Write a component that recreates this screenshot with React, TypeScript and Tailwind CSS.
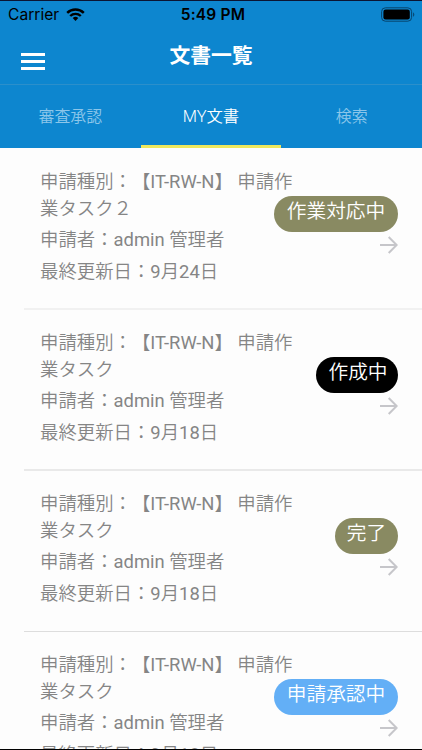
import { clsx } from 'clsx';

interface DocumentItem {
  title: string;
  applicant: string;
  updatedAt: string;
  status: string;
  badgeClass: string;
  dividerClass: string;
}

const documents: DocumentItem[] = [
  {
    title: '【IT-RW-N】 申請作業タスク２',
    applicant: 'admin 管理者',
    updatedAt: '9月24日',
    status: '作業対応中',
    badgeClass: 'w-[124px] bg-[#898a62]',
    dividerClass: 'border-b-2 border-[#f1f1f1]',
  },
  {
    title: '【IT-RW-N】 申請作業タスク',
    applicant: 'admin 管理者',
    updatedAt: '9月18日',
    status: '作成中',
    badgeClass: 'w-[82px] pl-[2px] bg-black',
    dividerClass: 'border-b-2 border-[#e9e9e9]',
  },
  {
    title: '【IT-RW-N】 申請作業タスク',
    applicant: 'admin 管理者',
    updatedAt: '9月18日',
    status: '完了',
    badgeClass: 'w-[63px] bg-[#898a62]',
    dividerClass: 'border-b border-[#dddddd]',
  },
  {
    title: '【IT-RW-N】 申請作業タスク',
    applicant: 'admin 管理者',
    updatedAt: '9月18日',
    status: '申請承認中',
    badgeClass: 'w-[124px] bg-[#63aff6]',
    dividerClass: 'border-b border-[#dddddd]',
  },
];

const tabs = [
  { label: '審査承認', active: false },
  { label: 'MY文書', active: true },
  { label: '検索', active: false },
];

function StatusBar() {
  return (
    <div className="grid h-[27px] grid-cols-3 items-center pl-2 pr-[7px] pt-px font-['Inter','Liberation_Sans',sans-serif] text-black">
      <div className="flex items-center gap-2">
        <span className="text-[15.6px] font-normal leading-none">Carrier</span>
        <svg className="-ml-px -mt-px h-[13px] w-[19px]" viewBox="0 0 19 13">
          <path d="M1.2 4.8a12 12 0 0 1 16.6 0" fill="none" stroke="currentColor" strokeWidth="2.5" />
          <path d="M4.2 8a7.6 7.6 0 0 1 10.6 0" fill="none" stroke="currentColor" strokeWidth="2.4" />
          <path d="M6.7 10.1a4 4 0 0 1 5.6 0L9.5 13z" fill="currentColor" />
        </svg>
      </div>
      <span className="pl-[3px] text-center text-[15.5px] font-semibold leading-none tracking-[0.2px]">5:49 PM</span>
      <svg className="-mt-px h-[15px] w-[34px] justify-self-end" viewBox="0 0 34 15">
        <rect x="0.6" y="0.8" width="30" height="13.4" rx="3.8" fill="none" stroke="#07446c" strokeWidth="1" />
        <rect x="2.4" y="2.6" width="26.4" height="9.8" rx="2.2" fill="black" />
        <path d="M32.1 5.2c1.6.7 1.6 3.9 0 4.6z" fill="#07446c" />
      </svg>
    </div>
  );
}

function Header() {
  return (
    <header className="h-[148px] shrink-0 border-t border-[#0b1533] bg-[#0d86cf]">
      <StatusBar />
      <div className="grid h-[57px] grid-cols-[60px_1fr_60px] border-b border-[#2b8fcb]">
        <button className="flex flex-col gap-1 pl-[21px] pt-[25px]">
          <span className="h-[3px] w-6 bg-white" />
          <span className="h-[3px] w-6 bg-white" />
          <span className="h-[3px] w-6 bg-white" />
        </button>
        <h1 className="pt-[15px] text-center text-[20.8px] font-bold leading-[27px] text-white">文書一覧</h1>
      </div>
      <nav className="grid h-[63px] grid-cols-3">
        {tabs.map((tab) => (
          <button
            key={tab.label}
            className={clsx(
              'border-b-3 font-[350]',
              tab.active
                ? 'border-[#eee85d] pt-[5px] text-[16.4px] text-white'
                : 'border-transparent pt-[3px] text-[15.9px] text-[#8cc6ea]'
            )}
          >
            {tab.label}
          </button>
        ))}
      </nav>
    </header>
  );
}

// Latin text and digits use a regular weight next to the lighter Japanese glyphs
function MixedText({ text }: { text: string }) {
  return (
    <>
      {text
        .split(/([\x21-\x7e]+)/)
        .map((part, index) => (index % 2 === 1 ? <span key={index} className="font-normal">{part}</span> : part))}
    </>
  );
}

function DocumentRow({ item }: { item: DocumentItem }) {
  return (
    <li className={clsx('flex h-[161px] justify-between pl-4 pr-6 pt-[19px]', item.dividerClass)}>
      <div className="flex w-[256px] flex-col gap-1 text-[18.4px] leading-[27.4px] text-[#858585] [text-spacing-trim:space-all]">
        <p>
          <MixedText text={`申請種別：${item.title}`} />
        </p>
        <p>
          <MixedText text={`申請者：${item.applicant}`} />
        </p>
        <p>
          <MixedText text={`最終更新日：${item.updatedAt}`} />
        </p>
      </div>
      <div className="-ml-8 flex shrink-0 flex-col items-end pt-[28.8px]">
        <span
          className={clsx(
            'h-[35.4px] rounded-full text-center text-[19.7px] leading-[32px] text-white',
            item.badgeClass
          )}
        >
          {item.status}
        </span>
        <svg className="mt-[4.6px] h-[18px] w-[18px]" viewBox="0 0 18 18" fill="none" stroke="#c6c6ca" strokeWidth="2">
          <path d="M0 9h16.5M8.7 1l8 8-8 8" />
        </svg>
      </div>
    </li>
  );
}

export default function App() {
  return (
    <main className="flex h-[750px] w-[422px] flex-col overflow-hidden border-b border-black bg-[#fdfdfd] font-['Roboto','Noto_Sans_CJK_JP',sans-serif] font-[350]">
      <Header />
      <ul className="min-h-0 flex-1 overflow-hidden pl-6 pt-[0.6px]">
        {documents.map((item, index) => (
          <DocumentRow key={index} item={item} />
        ))}
      </ul>
    </main>
  );
}
